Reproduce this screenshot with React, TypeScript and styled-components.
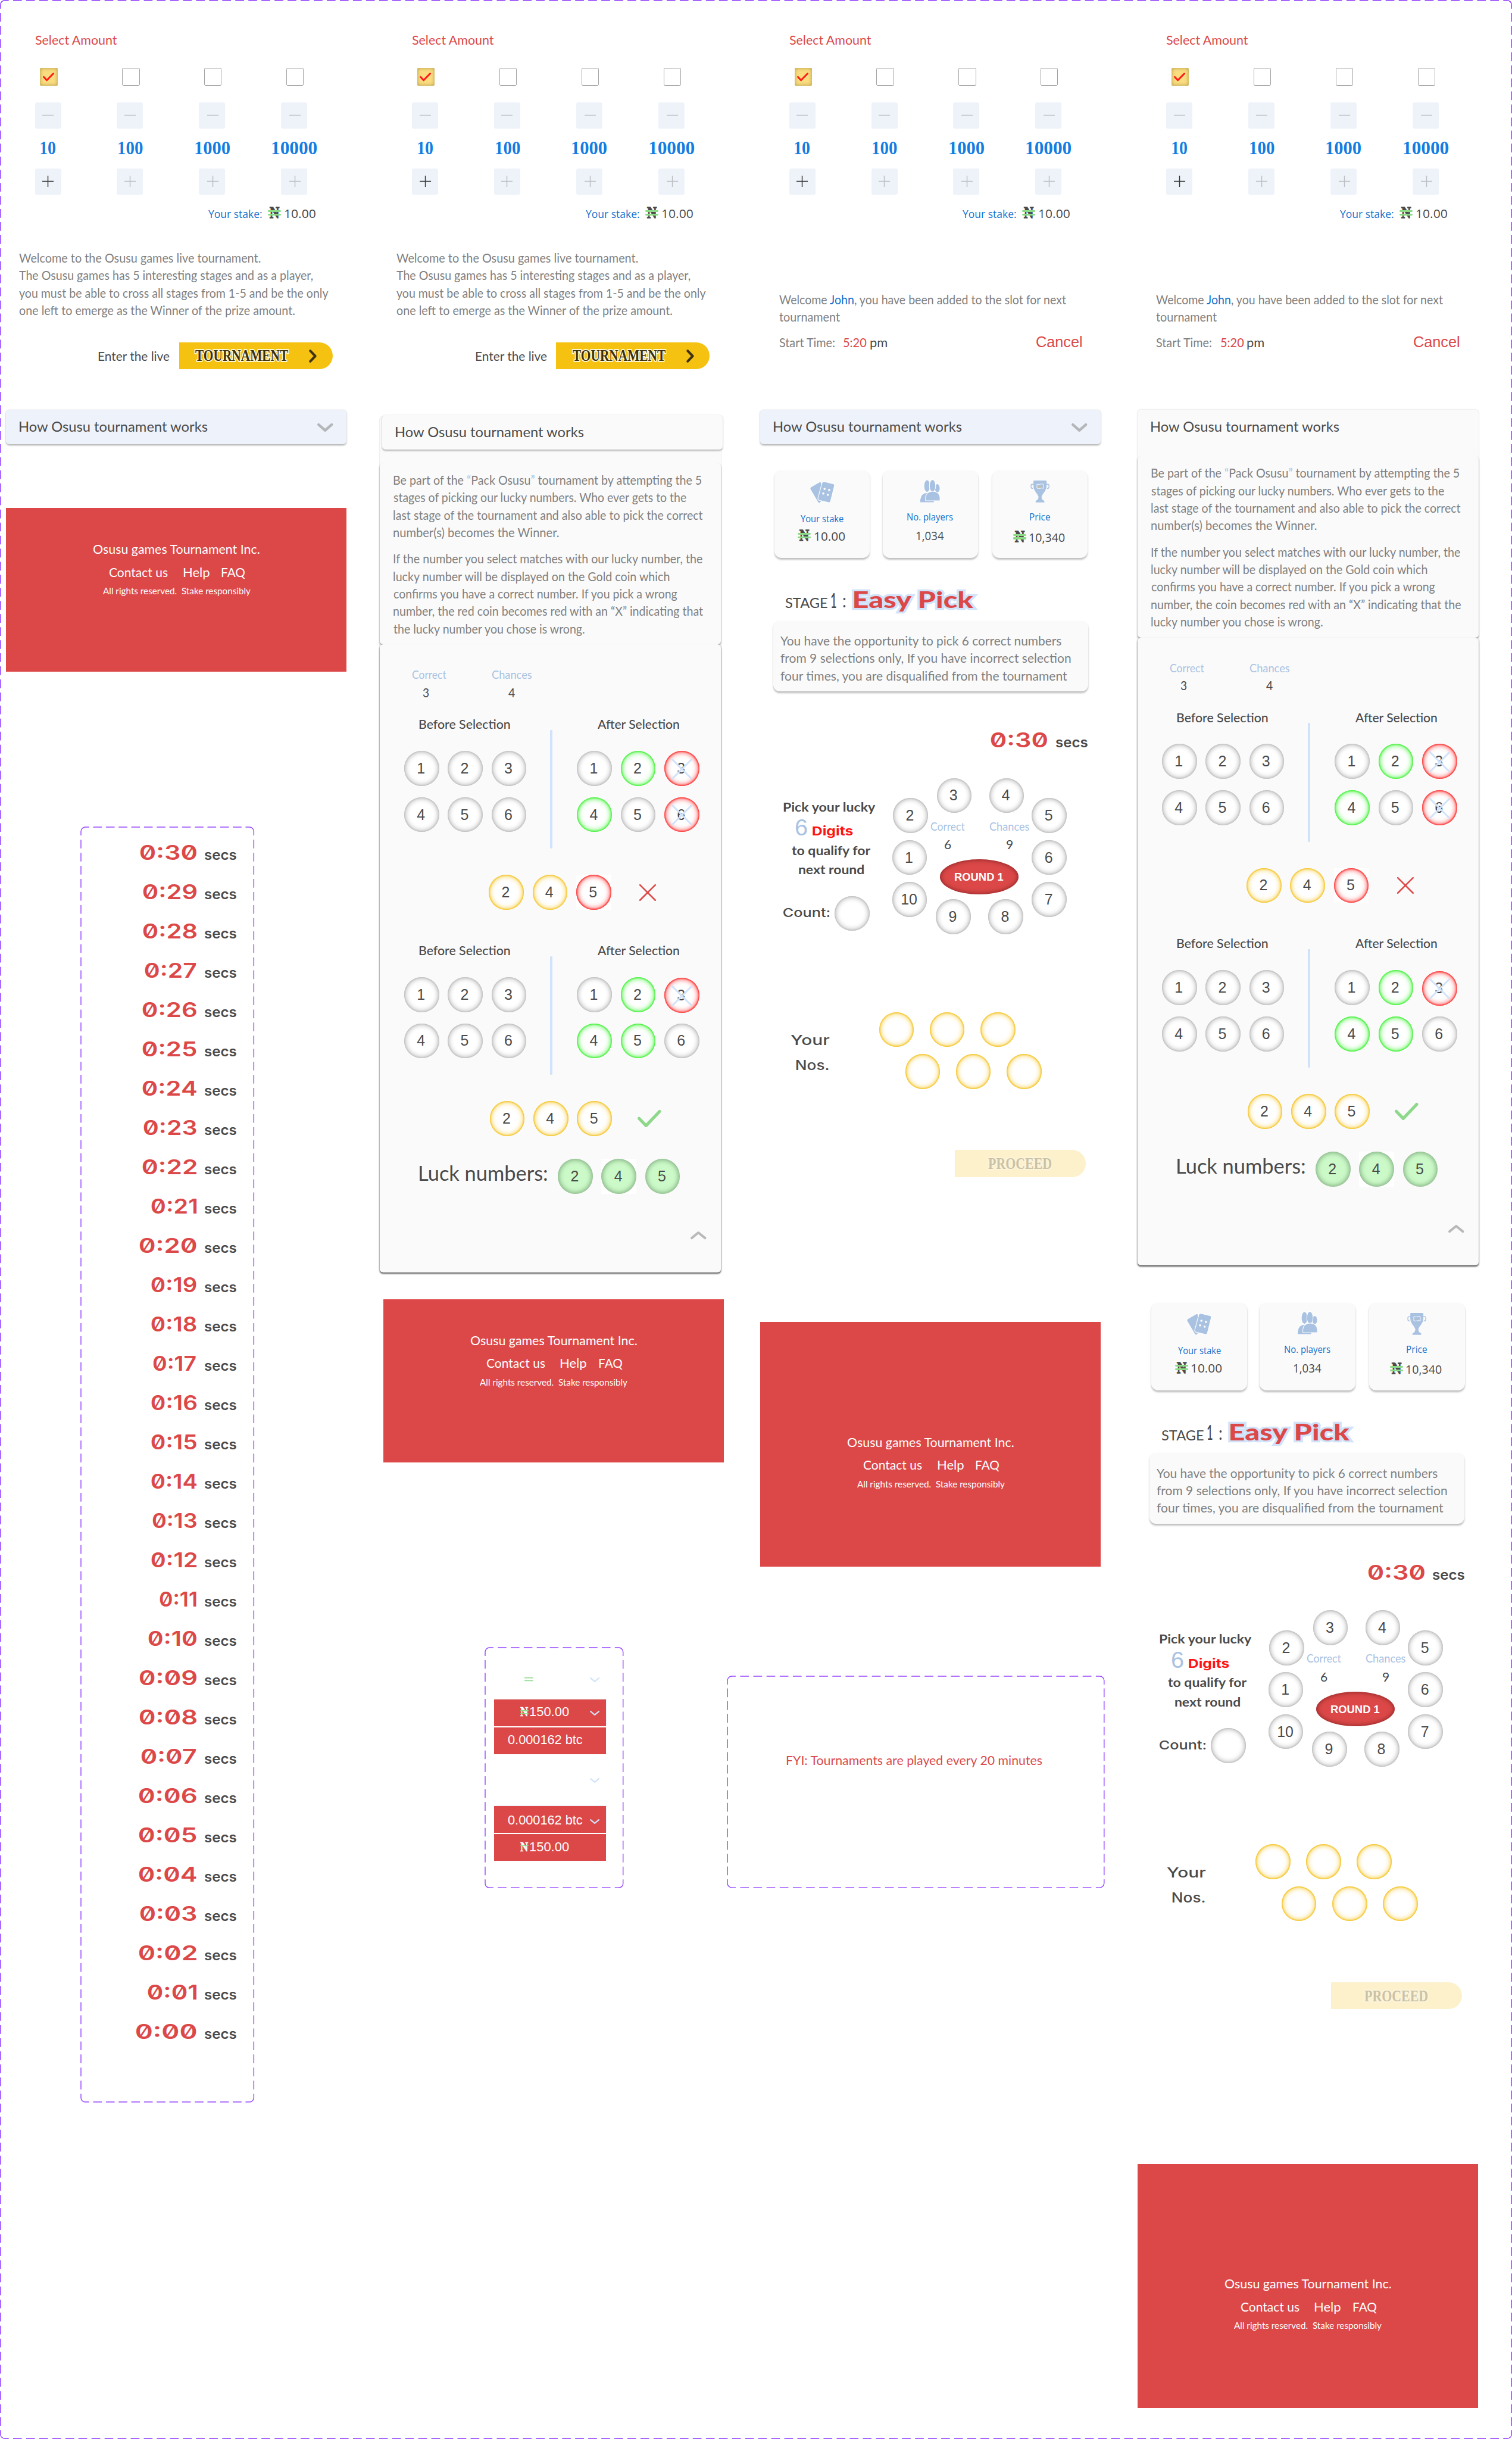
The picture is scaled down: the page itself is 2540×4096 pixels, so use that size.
import React, { useLayoutEffect, useRef, useState } from "react";
import styled, { createGlobalStyle, css } from "styled-components";

/* Design units are the board's own pixels; u() converts them to screen pixels. */
const SCALE = 2540 / 3464;
const u = (n: number) => `${+(n * SCALE).toFixed(3)}px`;

const RED = "#dc4848";
const INK = "#4a4a4a";
const GREY = "#808080";
const BLUE = "#1271ce";
const PALE = "#a9c2e2";
const ICE = "#d1e3fa";
const PAPER = "#fafafa";

type Face = "body" | "light" | "display" | "tech" | "plain";

/* drop: how far the baseline lies under the middle of the line, in em */
const faces: Record<Face, { family: string; drop: number }> = {
  body: { family: '"Lato", sans-serif', drop: 0.387 },
  light: { family: '"Open Sans", "Noto Sans", sans-serif', drop: 0.388 },
  display: { family: '"Liberation Serif", serif', drop: 0.3375 },
  tech: { family: '"Inter", sans-serif', drop: 0.364 },
  plain: { family: '"Liberation Sans", Arial, sans-serif', drop: 0.3465 },
};

const Global = createGlobalStyle`
  html, body { margin: 0; padding: 0; background: #fff; }
  *, *::before, *::after { box-sizing: border-box; }
`;

/* ---------- text ---------- */

const TextSlot = styled.div<{ $w: number; $rise?: number; $ml?: number }>`
  display: flex;
  align-items: flex-end;
  flex: none;
  width: ${(p) => u(p.$w)};
  height: ${(p) => (p.$rise ? u(p.$rise) : "auto")};
  margin-left: ${(p) => u(p.$ml ?? 0)};
`;

const Glyphs = styled.span<{
  $face: Face;
  $size: number;
  $color: string;
  $weight: number;
  $outline?: string;
  $outlineWidth?: number;
}>`
  display: block;
  flex: none;
  white-space: pre;
  transform-origin: 0 50%;
  font-family: ${(p) => faces[p.$face].family};
  font-size: ${(p) => u(p.$size)};
  font-weight: ${(p) => p.$weight};
  line-height: 1;
  margin-bottom: ${(p) => -(0.5 - faces[p.$face].drop)}em;
  color: ${(p) => p.$color};
  ${(p) => p.$face === "tech" && css`font-feature-settings: "zero" 1;`}
  ${(p) =>
    p.$outline &&
    css`
      -webkit-text-stroke: ${u(p.$outlineWidth ?? 4)} ${p.$outline};
      paint-order: stroke fill;
    `}
`;

type TextProps = {
  w: number;
  size?: number;
  color?: string;
  face?: Face;
  weight?: number;
  rise?: number;
  ml?: number;
  outline?: string;
  outlineWidth?: number;
  children: React.ReactNode;
};

/* One line of text whose ink fills the given width and whose baseline is the slot's bottom edge. */
function Text({
  w,
  size = 28,
  color = INK,
  face = "body",
  weight = 400,
  rise,
  ml,
  outline,
  outlineWidth,
  children,
}: TextProps) {
  const ref = useRef<HTMLSpanElement>(null);
  const [fit, setFit] = useState({ scale: 1, shift: 0 });
  useLayoutEffect(() => {
    const el = ref.current;
    const ctx = document.createElement("canvas").getContext("2d");
    if (!el || !ctx) return;
    const cs = getComputedStyle(el);
    ctx.font = `${cs.fontWeight} ${cs.fontSize} ${cs.fontFamily}`;
    const m = ctx.measureText(el.textContent ?? "");
    const ink = m.actualBoundingBoxLeft + m.actualBoundingBoxRight;
    if (!ink) return;
    const scale = (w * SCALE) / ink;
    setFit({ scale, shift: m.actualBoundingBoxLeft * scale });
  }, [w]);
  return (
    <TextSlot $w={w} $rise={rise} $ml={ml}>
      <Glyphs
        ref={ref}
        $face={face}
        $size={size}
        $color={color}
        $weight={weight}
        $outline={outline}
        $outlineWidth={outlineWidth}
        style={{ transform: `translateX(${fit.shift}px) scaleX(${fit.scale})` }}
      >
        {children}
      </Glyphs>
    </TextSlot>
  );
}

/* ---------- layout primitives ---------- */

const Board = styled.main`
  position: relative;
  display: flex;
  align-items: flex-start;
  gap: ${u(84)};
  width: ${u(3464)};
  height: ${u(5586)};
  padding-left: ${u(14)};
  overflow: hidden;
  background: #fff;
`;

const Column = styled.section`
  display: flex;
  flex-direction: column;
  flex: none;
  width: ${u(780)};
`;

const BaseRow = styled.div<{ $rise?: number; $ml?: number; $mt?: number }>`
  display: flex;
  align-items: flex-end;
  height: ${(p) => (p.$rise ? u(p.$rise) : "auto")};
  margin-left: ${(p) => u(p.$ml ?? 0)};
  margin-top: ${(p) => u(p.$mt ?? 0)};
`;

const TopRow = styled.div<{ $ml?: number; $mt?: number }>`
  display: flex;
  align-items: flex-start;
  margin-left: ${(p) => u(p.$ml ?? 0)};
  margin-top: ${(p) => u(p.$mt ?? 0)};
`;

const Stack = styled.div<{ $ml?: number; $w?: number }>`
  display: flex;
  flex-direction: column;
  flex: none;
  margin-left: ${(p) => u(p.$ml ?? 0)};
  width: ${(p) => (p.$w ? u(p.$w) : "auto")};
`;

/* ---------- dashed component frames ---------- */

const FrameBox = styled.section<{ $w: number; $h: number; $ml: number; $mt: number }>`
  position: relative;
  display: flex;
  flex-direction: column;
  flex: none;
  width: ${(p) => u(p.$w)};
  height: ${(p) => u(p.$h)};
  margin-left: ${(p) => u(p.$ml)};
  margin-top: ${(p) => u(p.$mt)};
`;

const FrameLines = styled.svg`
  position: absolute;
  inset: 0;
  width: 100%;
  height: 100%;
  overflow: visible;
  pointer-events: none;
`;

function Dashes({ w, h, inset = 0 }: { w: number; h: number; inset?: number }) {
  const a = inset;
  const r = w - inset;
  const b = h - inset;
  const gapFor = (len: number) => {
    const free = len - 38;
    const n = Math.max(1, Math.round((free - 10) / 30));
    return (free - n * 20) / (n + 1);
  };
  const gx = gapFor(r - a);
  const gy = gapFor(b - a);
  return (
    <FrameLines viewBox={`0 0 ${w} ${h}`} preserveAspectRatio="none" fill="none" stroke="#9747ff" strokeWidth={2}>
      <path d={`M${a} ${a + 19}V${a + 10}A10 10 0 0 1 ${a + 10} ${a}H${a + 19}`} />
      <path d={`M${r - 19} ${a}H${r - 10}A10 10 0 0 1 ${r} ${a + 10}V${a + 19}`} />
      <path d={`M${r} ${b - 19}V${b - 10}A10 10 0 0 1 ${r - 10} ${b}H${r - 19}`} />
      <path d={`M${a + 19} ${b}H${a + 10}A10 10 0 0 1 ${a} ${b - 10}V${b - 19}`} />
      <path d={`M${a + 19} ${a}H${r - 19}M${a + 19} ${b}H${r - 19}`} strokeDasharray={`20 ${gx}`} strokeDashoffset={20} />
      <path d={`M${a} ${a + 19}V${b - 19}M${r} ${a + 19}V${b - 19}`} strokeDasharray={`20 ${gy}`} strokeDashoffset={20} />
    </FrameLines>
  );
}

/* ---------- small drawings ---------- */

const Drawing = styled.svg<{ $w: number; $h: number; $ml?: number; $mt?: number }>`
  display: block;
  flex: none;
  overflow: visible;
  width: ${(p) => u(p.$w)};
  height: ${(p) => u(p.$h)};
  margin-left: ${(p) => u(p.$ml ?? 0)};
  margin-top: ${(p) => u(p.$mt ?? 0)};
`;

const line = { fill: "none", strokeLinecap: "round", strokeLinejoin: "round" } as const;

function Chevron({
  w,
  h,
  color,
  stroke,
  ml,
  mt,
  up,
}: {
  w: number;
  h: number;
  color: string;
  stroke: number;
  ml?: number;
  mt?: number;
  up?: boolean;
}) {
  const s = stroke / 2;
  const d = up ? `M${s} ${h - s}L${w / 2} ${s}L${w - s} ${h - s}` : `M${s} ${s}L${w / 2} ${h - s}L${w - s} ${s}`;
  return (
    <Drawing $w={w} $h={h} $ml={ml} $mt={mt} viewBox={`0 0 ${w} ${h}`}>
      <path {...line} d={d} stroke={color} strokeWidth={stroke} />
    </Drawing>
  );
}

const NairaBox = styled.span<{ $small?: boolean; $ml?: number }>`
  position: relative;
  display: flex;
  justify-content: center;
  flex: none;
  width: ${(p) => u(p.$small ? 19 : 30)};
  margin-left: ${(p) => u(p.$ml ?? 0)};
  &::before,
  &::after {
    content: "";
    position: absolute;
    left: 0;
    right: 0;
    z-index: 1;
    height: ${(p) => u(p.$small ? 2 : 4.2)};
    bottom: ${(p) => u(p.$small ? 13 : 14)};
    border-radius: ${u(2)};
    background: #8bdb86;
  }
  &::after {
    bottom: ${(p) => u(p.$small ? 7 : 6)};
  }
`;

const Naira = ({ small, ml }: { small?: boolean; ml?: number }) => (
  <NairaBox $small={small} $ml={ml}>
    <Text
      face="display"
      weight={700}
      size={small ? 32 : 36}
      w={small ? 18 : 22}
      color={small ? "#fff" : INK}
      outline={small ? "#fff" : INK}
      outlineWidth={small ? 1 : 2}
    >
      N
    </Text>
  </NairaBox>
);

/* ---------- stake selector ---------- */

const TopArea = styled.div`
  display: flex;
  flex-direction: column;
  flex: none;
  height: ${u(938)};
`;

const BoxRow = styled.div<{ $gap: number; $mt: number; $ml?: number }>`
  display: flex;
  gap: ${(p) => u(p.$gap)};
  margin-top: ${(p) => u(p.$mt)};
  margin-left: ${(p) => u(p.$ml ?? 0)};
`;

const CheckBox = styled.div<{ $on?: boolean }>`
  display: flex;
  align-items: center;
  justify-content: center;
  width: ${u(40)};
  height: ${u(40)};
  border-radius: ${u(3)};
  border: ${(p) => (p.$on ? "none" : `${u(2)} solid #a3a3a3`)};
  background: ${(p) => (p.$on ? "#fadd7f" : "#fff")};
  box-shadow: ${(p) => (p.$on ? `inset 0 0 ${u(8)} rgba(80, 60, 0, 0.45)` : "none")};
`;

const StepBox = styled.div<{ $nudge?: boolean }>`
  display: flex;
  align-items: center;
  justify-content: center;
  width: ${u(60)};
  height: ${u(60)};
  padding-left: ${(p) => u(p.$nudge ? 4 : 0)};
  border-radius: ${u(4)};
  background: #eef3fa;
`;

const amounts = [
  { value: "10", w: 35, ml: 13 },
  { value: "100", w: 56, ml: 144 },
  { value: "1000", w: 80, ml: 119 },
  { value: "10000", w: 103.5, ml: 96.5 },
];

function Selector() {
  return (
    <Stack $ml={66}>
      <Text rise={103} w={189} size={29} color={RED}>
        Select Amount
      </Text>
      <BoxRow $gap={148} $mt={53} $ml={12}>
        {amounts.map((a, i) => (
          <CheckBox key={a.value} $on={i === 0}>
            {i === 0 && (
              <Drawing $w={26} $h={20} $ml={-2} viewBox="0 0 26 20">
                <path {...line} d="M2 10L9 17.5L24 2" stroke="#ff1a1a" strokeWidth={4} />
              </Drawing>
            )}
          </CheckBox>
        ))}
      </BoxRow>
      <BoxRow $gap={128} $mt={38}>
        {amounts.map((a, i) => (
          <StepBox key={a.value} $nudge={i > 1}>
            <Drawing $w={26} $h={26} viewBox="0 0 26 26">
              <path d="M0 13H26" stroke="#bcbfc4" strokeWidth={2} />
            </Drawing>
          </StepBox>
        ))}
      </BoxRow>
      <BaseRow $rise={60}>
        {amounts.map((a) => (
          <Text key={a.value} face="display" weight={700} size={42} w={a.w} ml={a.ml} color="#147de2">
            {a.value}
          </Text>
        ))}
      </BaseRow>
      <BoxRow $gap={128} $mt={32}>
        {amounts.map((a, i) => (
          <StepBox key={a.value} $nudge={i > 1}>
            <Drawing $w={26} $h={26} viewBox="0 0 26 26">
              <path d="M0 13H26M13 0V26" stroke={i === 0 ? "#333" : "#bcbfc4"} strokeWidth={2} />
            </Drawing>
          </StepBox>
        ))}
      </BoxRow>
      <BaseRow $rise={54}>
        <Text face="light" size={25} w={122.5} ml={397.5} color={BLUE}>
          Your stake:
        </Text>
        <Naira ml={14} />
        <Text face="light" size={28} w={71} ml={8}>
          10.00
        </Text>
      </BaseRow>
    </Stack>
  );
}

const PillButton = styled.button<{ $w: number; $ml: number; $mt?: number; $faded?: boolean }>`
  display: flex;
  align-items: flex-start;
  flex: none;
  width: ${(p) => u(p.$w)};
  height: ${u(62)};
  margin: ${(p) => u(p.$mt ?? 0)} 0 0 ${(p) => u(p.$ml)};
  padding: 0;
  border: 0;
  border-radius: 0 ${u(31)} ${u(31)} 0;
  background: ${(p) => (p.$faded ? "#fdf1cc" : "#f5c211")};
`;

const Intro = () => (
  <>
    <Stack $ml={30}>
      <Text rise={102} w={553} color={GREY}>Welcome to the Osusu games live tournament.</Text>
      <Text rise={40} w={673} color={GREY}>The Osusu games has 5 interesting stages and as a player,</Text>
      <Text rise={40} w={709} color={GREY}>you must be able to cross all stages from 1-5 and be the only</Text>
      <Text rise={40} w={633} color={GREY}>one left to emerge as the Winner of the prize amount.</Text>
    </Stack>
    <TopRow $mt={62} $ml={211}>
      <Text rise={44} w={164} size={29}>Enter the live</Text>
      <PillButton $w={352} $ml={21}>
        <Text
          rise={44}
          ml={38}
          w={213}
          face="display"
          weight={700}
          size={37}
          color="#3d2f08"
          outline="#fffbe0"
          outlineWidth={5}
        >
          TOURNAMENT
        </Text>
        <Drawing $w={18} $h={30} $ml={47} $mt={17} viewBox="0 0 18 30">
          <path {...line} d="M3 3L14.500 15L3 27" stroke="#3f3212" strokeWidth={5.5} />
        </Drawing>
      </PillButton>
    </TopRow>
  </>
);

const Name = styled.span`
  color: ${BLUE};
`;

const Joined = () => (
  <Stack $ml={43}>
    <Text rise={197} w={660} color={GREY}>
      Welcome <Name>John</Name>, you have been added to the slot for next
    </Text>
    <Text rise={40} w={140} color={GREY}>tournament</Text>
    <BaseRow $rise={59}>
      <Text w={127.5} color={GREY}>Start Time:</Text>
      <Text w={53} ml={20} color={RED}>5:20</Text>
      <Text w={38.5} ml={8}>pm</Text>
      <Text w={103.6} ml={343} face="plain" size={34} color={RED}>Cancel</Text>
    </BaseRow>
  </Stack>
);

/* ---------- accordion header and footer ---------- */

const Bar = styled.div<{ $light?: boolean }>`
  position: relative;
  display: flex;
  align-items: flex-start;
  flex: none;
  width: ${u(780)};
  height: ${u(80)};
  margin: ${(p) => (p.$light ? `${u(-4)} 0 0 ${u(6)}` : "0")};
  border-radius: ${u(8)};
  background: ${(p) => (p.$light ? PAPER : "#eef2fa")};
  box-shadow: 0 ${u(2)} ${u(4)} rgba(0, 0, 0, 0.3);
`;

const ClosedBar = () => (
  <Bar>
    <Text rise={52} w={432} ml={31} size={32}>How Osusu tournament works</Text>
    <Chevron w={36} h={19} ml={250} mt={32} color="#b4b6b9" stroke={6} />
  </Bar>
);

const FooterBox = styled.footer<{ $tall?: boolean; $mt: number }>`
  display: flex;
  flex-direction: column;
  align-items: center;
  flex: none;
  height: ${(p) => u(p.$tall ? 560 : 374)};
  margin-top: ${(p) => u(p.$mt)};
  background: ${RED};
`;

const Footer = ({ tall, mt }: { tall?: boolean; mt: number }) => (
  <FooterBox $tall={tall} $mt={mt}>
    <Text rise={tall ? 287 : 106} w={381} ml={2} size={29} color="#fff">Osusu games Tournament Inc.</Text>
    <BaseRow $rise={52} $ml={6}>
      <Text w={133} size={30} color="#fff">Contact us</Text>
      <Text w={59} ml={37} size={30} color="#fff">Help</Text>
      <Text w={53.5} ml={29} size={30} color="#fff">FAQ</Text>
    </BaseRow>
    <Text rise={40} w={339} ml={2} size={22} color="#fff">{"All rights reserved.  Stake responsibly"}</Text>
  </FooterBox>
);

/* ---------- coins ---------- */

type Tone = "plain" | "green" | "red" | "gold" | "lucky";

const rings: Record<Tone, string> = {
  plain: `inset 0 0 ${u(3)} ${u(1)} #bdbdbd, inset 0 0 ${u(12)} ${u(2)} rgba(0, 0, 0, 0.3)`,
  green: `inset 0 0 ${u(3)} ${u(2)} #48f03e, inset 0 0 ${u(12)} ${u(3)} rgba(72, 245, 62, 0.85)`,
  red: `inset 0 0 ${u(3)} ${u(2)} #fb3636, inset 0 0 ${u(12)} ${u(3)} rgba(255, 50, 50, 0.8)`,
  gold: `inset 0 0 ${u(3)} ${u(2)} #f4c52c, inset 0 0 ${u(12)} ${u(3)} rgba(247, 200, 50, 0.8)`,
  lucky: `inset 0 0 ${u(12)} ${u(2)} rgba(0, 40, 0, 0.4)`,
};

const CoinFace = styled.div<{ $tone: Tone; $down?: number }>`
  position: relative;
  display: flex;
  align-items: center;
  justify-content: center;
  flex: none;
  width: ${u(80)};
  height: ${u(80)};
  margin-top: ${(p) => u(p.$down ?? 0)};
  padding-right: ${u(3)};
  border-radius: 50%;
  background: ${(p) => (p.$tone === "lucky" ? "#cbfac8" : "#fff")};
  box-shadow: ${(p) => rings[p.$tone]};
  color: ${INK};
  font: 400 ${u(34)} / 1 ${faces.plain.family};
`;

const Plate = styled.div`
  background: #fff;
`;

const Strike = styled.svg`
  position: absolute;
  left: ${u(16)};
  top: ${u(17)};
  width: ${u(48)};
  height: ${u(48)};
`;

const Coin = ({ n, tone = "plain", struck, down }: { n?: number; tone?: Tone; struck?: boolean; down?: number }) => (
  <CoinFace $tone={tone} $down={down}>
    {n}
    {struck && (
      <Strike viewBox="0 0 48 48">
        <path d="M1.500 1.500L46.500 46.500M46.500 1.500L1.500 46.500" stroke={ICE} strokeWidth={4} strokeLinecap="round" />
      </Strike>
    )}
  </CoinFace>
);

const CoinGrid = styled.div<{ $ml: number }>`
  display: grid;
  grid-template-columns: repeat(3, ${u(80)});
  grid-auto-rows: ${u(80)};
  gap: ${u(26)} ${u(20)};
  margin: ${u(48)} 0 0 ${(p) => u(p.$ml)};
`;

const CoinRow = styled.div<{ $ml?: number; $mt?: number; $gap?: number }>`
  display: flex;
  align-items: center;
  gap: ${(p) => u(p.$gap ?? 20)};
  margin-left: ${(p) => u(p.$ml ?? 0)};
  margin-top: ${(p) => u(p.$mt ?? 0)};
`;

/* ---------- how-it-works panel ---------- */

const Panel = styled.article<{ $ml: number; $mt: number }>`
  display: flex;
  flex-direction: column;
  flex: none;
  width: ${u(781)};
  height: ${u(1960)};
  margin: ${(p) => u(p.$mt)} 0 0 ${(p) => u(p.$ml)};
  border-radius: ${u(8)};
  background: ${PAPER};
  box-shadow: 0 ${u(1)} ${u(3)} rgba(0, 0, 0, 0.22);
`;

const PanelHead = styled.div`
  flex: none;
  height: ${u(107)};
`;

/* Every lower part adds to the shade along the sheet's sides. */
const PanelPart = styled.div<{ $h: number; $pl?: number; $shade: number }>`
  display: flex;
  flex-direction: column;
  flex: none;
  height: ${(p) => u(p.$h)};
  padding-left: ${(p) => u(p.$pl ?? 0)};
  border-radius: ${u(8)};
  background: ${PAPER};
  box-shadow: 0 ${u(3)} ${u(4)} ${u(-0.5)} rgba(0, 0, 0, ${(p) => p.$shade});
`;

const Divider = styled.div`
  flex: none;
  width: ${u(6)};
  height: ${u(272)};
  margin-left: ${u(54)};
  border-radius: ${u(2)};
  background: ${ICE};
`;

const Quote = styled.span`
  color: ${PALE};
`;

type Cell = { n: number; tone?: Tone; struck?: boolean; down?: number };

const before: Cell[] = [1, 2, 3, 4, 5, 6].map((n) => ({ n }));

const lostRound: Cell[] = [
  { n: 1 },
  { n: 2, tone: "green" },
  { n: 3, tone: "red", struck: true },
  { n: 4, tone: "green" },
  { n: 5 },
  { n: 6, tone: "red", struck: true },
];

const wonRound: Cell[] = [
  { n: 1 },
  { n: 2, tone: "green" },
  { n: 3, tone: "red", struck: true, down: 2 },
  { n: 4, tone: "green" },
  { n: 5, tone: "green" },
  { n: 6 },
];

const Example = ({ rise, cells }: { rise: number; cells: Cell[] }) => (
  <>
    <BaseRow $rise={rise}>
      <Text w={209} ml={90} weight={500}>Before Selection</Text>
      <Text w={188} ml={200} weight={500}>After Selection</Text>
    </BaseRow>
    <TopRow $mt={2}>
      <CoinGrid $ml={56}>
        {before.map((c) => (
          <Coin key={c.n} {...c} />
        ))}
      </CoinGrid>
      <Divider />
      <CoinGrid $ml={56}>
        {cells.map((c) => (
          <Coin key={c.n} {...c} />
        ))}
      </CoinGrid>
    </TopRow>
  </>
);

function HowItWorks({ detached, ml = 0, mt = 0 }: { detached?: boolean; ml?: number; mt?: number }) {
  const title = (
    <Text rise={52.5} w={432} ml={31.5} size={32}>How Osusu tournament works</Text>
  );
  return (
    <Panel $ml={ml} $mt={mt}>
      <PanelHead>{detached ? <Bar $light>{title}</Bar> : title}</PanelHead>
      <PanelPart $h={415} $pl={31} $shade={0.4}>
        <Text rise={49.6} w={707} color={GREY}>
          Be part of the <Quote>“</Quote>Pack Osusu<Quote>”</Quote> tournament by attempting the 5
        </Text>
        <Text rise={40} w={674} color={GREY}>stages of picking our lucky numbers. Who ever gets to the</Text>
        <Text rise={40} w={710} color={GREY}>last stage of the tournament and also able to pick the correct</Text>
        <Text rise={40} w={379} color={GREY}>number(s) becomes the Winner.</Text>
        <Text rise={60.3} w={712} color={GREY}>If the number you select matches with our lucky number, the</Text>
        <Text rise={40} w={635} color={GREY}>lucky number will be displayed on the Gold coin which</Text>
        <Text rise={40} w={653} color={GREY}>confirms you have a correct number. If you pick a wrong</Text>
        {detached ? (
          <>
            <Text rise={40} w={711} color={GREY}>number, the red coin becomes red with an “X” indicating that</Text>
            <Text rise={40} w={440} color={GREY}>the lucky number you chose is wrong.</Text>
          </>
        ) : (
          <>
            <Text rise={40} w={711} color={GREY}>number, the coin becomes red with an “X” indicating that the</Text>
            <Text rise={40} w={395} color={GREY}>lucky number you chose is wrong.</Text>
          </>
        )}
      </PanelPart>
      <PanelPart $h={1438} $shade={0.65}>
        <BaseRow $rise={79}>
          <Text w={79} ml={74} size={26} color={PALE}>Correct</Text>
          <Text w={92} ml={103} size={26} color={PALE}>Chances</Text>
        </BaseRow>
        <BaseRow $rise={42.4}>
          <Text w={14} ml={98.6}>3</Text>
          <Text w={15.5} ml={182.3}>4</Text>
        </BaseRow>
        <Example rise={72.6} cells={lostRound} />
        <CoinRow $mt={60} $ml={250}>
          <Coin n={2} tone="gold" />
          <Coin n={4} tone="gold" />
          <Plate>
            <Coin n={5} tone="red" />
          </Plate>
          <Drawing $w={38} $h={38} $ml={45} viewBox="0 0 38 38">
            <path d="M1.500 1.500L36.500 36.500M36.500 1.500L1.500 36.500" stroke={RED} strokeWidth={3.5} strokeLinecap="round" />
          </Drawing>
        </CoinRow>
        <Example rise={104} cells={wonRound} />
        <CoinRow $mt={60} $ml={252}>
          <Coin n={2} tone="gold" />
          <Coin n={4} tone="gold" />
          <Coin n={5} tone="gold" />
          <Drawing $w={54} $h={40} $ml={38} viewBox="0 0 54 40">
            <path {...line} d="M3.500 19.500L19.500 36L50.500 3.500" stroke="#8ed88b" strokeWidth={7} />
          </Drawing>
        </CoinRow>
        <TopRow $mt={52} $ml={92}>
          <Text rise={51} w={292} size={47}>Luck numbers:</Text>
          <CoinRow $ml={24}>
            <Coin n={2} tone="lucky" />
            <Plate>
              <Coin n={4} tone="lucky" />
            </Plate>
            <Coin n={5} tone="lucky" />
          </CoinRow>
        </TopRow>
        <Chevron up w={36} h={18} ml={712} mt={87} color="#b9b9b9" stroke={5.5} />
      </PanelPart>
    </Panel>
  );
}

/* ---------- stage ---------- */

const Card = styled.div<{ $ml?: number; $pt: number }>`
  display: flex;
  flex-direction: column;
  align-items: center;
  flex: none;
  width: ${u(219)};
  height: ${u(200)};
  margin-left: ${(p) => u(p.$ml ?? 0)};
  padding-top: ${(p) => u(p.$pt)};
  border-radius: ${u(16)};
  background: ${PAPER};
  box-shadow: 0 ${u(4)} ${u(4)} rgba(0, 0, 0, 0.25);
`;

const CardsIcon = () => (
  <Drawing $w={55} $h={50} viewBox="0 0 55 50">
    <path
      d="M1.500 13L21.500 1.500Q24 0.500 25 3L30 40L22 48Q19.500 49.500 18 46.500L0.500 16.500Q0 14.500 1.500 13Z"
      fill={PALE}
      stroke="#fff"
      strokeWidth={2}
      paintOrder="stroke"
    />
    <path
      d="M31.500 0.500L53 5.500Q55.500 6.500 55 9L46 45Q45 47.500 42.500 47L20 41.500Q18 40.500 18.500 38L28 2.500Q29 0 31.500 0.500Z"
      fill={PALE}
      stroke="#fff"
      strokeWidth={3}
      paintOrder="stroke"
    />
    {[[33, 16.5], [43.5, 19], [30, 27], [40.5, 30]].map(([x, y]) => (
      <circle key={x} cx={x} cy={y} r={2.5} fill="#fff" />
    ))}
  </Drawing>
);

const PlayersIcon = () => (
  <Drawing $w={45} $h={52} viewBox="0 0 45 52">
    <g fill={PALE} stroke="#fff" strokeWidth={2.5} paintOrder="stroke">
      <ellipse cx={39} cy={19} rx={5.5} ry={9.5} />
      <ellipse cx={15.5} cy={14} rx={6.5} ry={13.5} />
      <ellipse cx={28} cy={13.5} rx={6.5} ry={13.5} />
      <path d="M0 51V45Q2 30 16 29.500L31 40V51Z" />
      <path d="M12.500 47V40Q14 27 28.500 26.500Q43 27 44.500 40V47Z" />
    </g>
  </Drawing>
);

const TrophyIcon = () => (
  <Drawing $w={44} $h={51} viewBox="0 0 44 51">
    <path
      d="M7 8.500H4Q1.500 8.500 1.500 11V15Q1.500 18.500 6 18.500M37 8.500H40Q42.500 8.500 42.500 11V15Q42.500 18.500 38 18.500"
      fill="none"
      stroke={PALE}
      strokeWidth={2}
    />
    <path
      d="M9 0H35Q37 0 37 2V12C37 24 28 29 25.500 37Q25.500 44 30 45.500Q32.500 46 32 50H12Q11.500 46 14 45.500Q18.500 44 18.500 37C16 29 7 24 7 12V2Q7 0 9 0Z"
      fill={PALE}
    />
    <path d="M15 8Q19 10 22 8.500Q26 7 30 8.500V18Q26 16.500 22 18Q19 19 15 17.500Z" fill="none" stroke="#fff" strokeWidth={1.2} />
    <path d="M17 15.500L20 14.500M22 16L24.500 13M26 11.500L27 12" stroke="#dcb96a" strokeWidth={1.5} />
  </Drawing>
);

const DescBox = styled.div<{ $ml: number }>`
  display: flex;
  flex-direction: column;
  width: ${u(720.5)};
  height: ${u(162)};
  margin: ${u(28.5)} 0 0 ${(p) => u(p.$ml)};
  padding-left: ${u(16.5)};
  border-radius: ${u(15)};
  background: ${PAPER};
  box-shadow: 0 ${u(4)} ${u(4)} rgba(0, 0, 0, 0.25);
`;

const PlayArea = styled.div<{ $pl: number }>`
  display: flex;
  align-items: flex-start;
  height: ${u(428)};
  padding-left: ${(p) => u(p.$pl)};
`;

/* Coins lie round an oval, so each has its own place on this surface. */
const Ring = styled.div`
  position: relative;
  flex: none;
  width: ${u(400)};
  height: ${u(358)};
  margin-top: ${u(70)};
`;

const Pin = styled.div<{ $x: number; $y: number }>`
  position: absolute;
  left: ${(p) => u(p.$x)};
  top: ${(p) => u(p.$y)};
`;

const RoundBadge = styled.div`
  display: flex;
  justify-content: center;
  align-items: flex-start;
  width: ${u(180)};
  height: ${u(80)};
  border-radius: 50%;
  background: ${RED};
  box-shadow: inset 0 0 ${u(12)} rgba(60, 0, 0, 0.6);
`;

const ringCoins = [
  { n: 1, x: 0, y: 142 },
  { n: 2, x: 2, y: 46 },
  { n: 3, x: 102, y: 0 },
  { n: 4, x: 222, y: 0 },
  { n: 5, x: 320, y: 46 },
  { n: 6, x: 320, y: 142 },
  { n: 7, x: 320, y: 238 },
  { n: 8, x: 220, y: 278 },
  { n: 9, x: 100, y: 278 },
  { n: 10, x: 0, y: 238 },
];

function Clock({ time, w, ml, rise }: { time: string; w: number; ml?: number; rise?: number }) {
  return (
    <BaseRow $rise={rise} $ml={ml}>
      <Text face="tech" weight={600} size={46} w={w} color={RED}>{time}</Text>
      <Text face="tech" weight={600} size={32} w={72} ml={19}>secs</Text>
    </BaseRow>
  );
}

function Stage({ mt, shift = 0 }: { mt: number; shift?: number }) {
  return (
    <>
      <TopRow $mt={mt} $ml={32}>
        <Card $pt={25}>
          <CardsIcon />
          <Text rise={44} w={98} face="light" size={23} color={BLUE}>Your stake</Text>
          <BaseRow $rise={41.5} $ml={-4}>
            <Naira />
            <Text w={70} ml={7} face="light">10.00</Text>
          </BaseRow>
        </Card>
        <Card $ml={29} $pt={21}>
          <PlayersIcon />
          <Text rise={43} w={105} face="light" size={23} color={BLUE}>No. players</Text>
          <Text rise={44} w={64} face="light">1,034</Text>
        </Card>
        <Card $ml={32} $pt={23}>
          <TrophyIcon />
          <Text rise={42} w={46.5} face="light" size={23} color={BLUE}>Price</Text>
          <BaseRow $rise={47} $ml={-5}>
            <Naira />
            <Text w={81} ml={7} face="light">10,340</Text>
          </BaseRow>
        </Card>
      </TopRow>
      <BaseRow $rise={115.5} $ml={56.5 + shift}>
        <Text w={97} size={32}>STAGE</Text>
        <Text w={12} ml={8} size={46} weight={500}>1</Text>
        <Text w={6} ml={15} size={42}>:</Text>
        <Text w={277} ml={19} size={53} weight={900} color={RED} outline={ICE} outlineWidth={9}>Easy Pick</Text>
      </BaseRow>
      <DescBox $ml={30 + shift}>
        <Text rise={56.6} w={645} color={GREY}>You have the opportunity to pick 6 correct numbers</Text>
        <Text rise={40} w={667} color={GREY}>from 9 selections only, If you have incorrect selection</Text>
        <Text rise={40} w={659} color={GREY}>four times, you are disqualified from the tournament</Text>
      </DescBox>
      <Clock time="0:30" w={130} ml={528} rise={128} />
      <PlayArea $pl={53 + shift}>
        <Stack $w={249}>
          <Text rise={148} w={213} weight={700} size={29}>Pick your lucky</Text>
          <BaseRow $rise={54.5} $ml={28.5}>
            <Text w={26} size={54} face="plain" color={PALE}>6</Text>
            <Text w={92.5} ml={12} face="tech" weight={700} size={28} color="#ff1414">Digits</Text>
          </BaseRow>
          <Text rise={44} ml={19} w={181.5} weight={700}>to qualify for</Text>
          <Text rise={44} ml={35} w={149.5} weight={700}>next round</Text>
          <TopRow $mt={49.5}>
            <Text rise={50} w={106} face="tech" weight={500} size={28}>Count:</Text>
            <Stack $ml={11}>
              <Coin />
            </Stack>
          </TopRow>
        </Stack>
        <Ring>
          {ringCoins.map((c) => (
            <Pin key={c.n} $x={c.x} $y={c.y}>
              <Coin n={c.n} />
            </Pin>
          ))}
          <Pin $x={87} $y={90}>
            <Text rise={30} w={79} size={26} color={PALE}>Correct</Text>
            <Text rise={43.5} w={14} ml={33}>6</Text>
          </Pin>
          <Pin $x={222.5} $y={90}>
            <Text rise={30} w={91.5} size={26} color={PALE}>Chances</Text>
            <Text rise={43.5} w={14} ml={39}>9</Text>
          </Pin>
          <Pin $x={110} $y={186}>
            <RoundBadge>
              <Text rise={50} w={112} face="plain" weight={700} size={26} color="#fff">ROUND 1</Text>
            </RoundBadge>
          </Pin>
        </Ring>
      </PlayArea>
      <TopRow $mt={178} $ml={shift}>
        <Stack $w={203} $ml={69}>
          <Text rise={77} w={90} face="tech" weight={500} size={31}>Your</Text>
          <Text rise={57} w={75.5} ml={12.5} face="tech" weight={500} size={31}>Nos.</Text>
        </Stack>
        <Stack>
          <CoinRow $gap={36}>
            <Coin tone="gold" />
            <Coin tone="gold" />
            <Coin tone="gold" />
          </CoinRow>
          <CoinRow $gap={36} $mt={16} $ml={60}>
            <Coin tone="gold" />
            <Coin tone="gold" />
            <Coin tone="gold" />
          </CoinRow>
        </Stack>
      </TopRow>
      <PillButton $w={300} $ml={446 + shift} $mt={140} $faded>
        <Text
          rise={44}
          ml={76}
          w={145}
          face="display"
          weight={700}
          size={36}
          color="#cac2a6"
          outline="#fdf4d9"
          outlineWidth={6}
        >
          PROCEED
        </Text>
      </PillButton>
    </>
  );
}

/* ---------- countdown ---------- */

const lastDigit = [111, 84, 104, 101, 104, 104, 104, 99, 103, 103];
const tensExtra = [28, 0, 20, 19];

const ticks = Array.from({ length: 31 }, (_, i) => {
  const s = 30 - i;
  return {
    time: `0:${String(s).padStart(2, "0")}`,
    w: lastDigit[s % 10] + tensExtra[Math.floor(s / 10)],
  };
});

const TickRow = styled.div<{ $rise: number }>`
  display: flex;
  flex: none;
  align-items: flex-end;
  justify-content: flex-end;
  height: ${(p) => u(p.$rise)};
  padding-right: ${u(40)};
`;

const Countdown = () => (
  <FrameBox $w={396} $h={2920} $ml={171} $mt={356}>
    <Dashes w={396} h={2920} />
    {ticks.map((t, i) => (
      <TickRow key={t.time} $rise={i === 0 ? 76 : 90}>
        <Clock time={t.time} w={t.w} />
      </TickRow>
    ))}
  </FrameBox>
);

/* ---------- currency switch ---------- */

const Option = styled.div<{ $mt: number; $edge?: string }>`
  display: flex;
  align-items: flex-start;
  flex: none;
  width: ${u(256)};
  height: ${u(62)};
  margin: ${(p) => u(p.$mt)} 0 0 ${u(21)};
  background: ${RED};
  box-shadow: ${(p) => p.$edge ?? "none"};
`;

const NairaAmount = ({ rise }: { rise: number }) => (
  <BaseRow $rise={rise} $ml={60}>
    <Naira small />
    <Text w={89} ml={3} face="plain" size={29} color="#fff">150.00</Text>
  </BaseRow>
);

const Arrow = ({ ml, mt = 0 }: { ml: number; mt?: number }) => (
  <Chevron w={22} h={11} ml={ml} mt={mt} color={ICE} stroke={3} />
);

const Currency = () => (
  <FrameBox $w={316} $h={550} $ml={233} $mt={423}>
    <Dashes w={316} h={550} />
    <TopRow $mt={67}>
      <Drawing $w={20} $h={14} $ml={91} viewBox="0 0 20 14">
        <path d="M0 2.500H20M0 9H20" stroke="#8fd98b" strokeWidth={2} />
      </Drawing>
      <Arrow ml={130} mt={2} />
    </TopRow>
    <Option $mt={38} $edge={`${u(2)} ${u(-1)} 0 #edf2fa`}>
      <NairaAmount rise={40} />
      <Arrow ml={49} mt={26} />
    </Option>
    <Option $mt={2}>
      <Text rise={40} w={172} ml={31} face="plain" size={29} color="#fff">0.000162 btc</Text>
    </Option>
    <TopRow $mt={54}>
      <Arrow ml={241} />
    </TopRow>
    <Option $mt={53} $edge={`${u(2)} ${u(-2)} 0 #edf2fa`}>
      <Text rise={44.5} w={172} ml={31} face="plain" size={29} color="#fff">0.000162 btc</Text>
      <Arrow ml={17} mt={30} />
    </Option>
    <Option $mt={2}>
      <NairaAmount rise={41} />
    </Option>
  </FrameBox>
);

const Notice = () => (
  <FrameBox $w={863} $h={484} $ml={-76} $mt={251}>
    <Dashes w={863} h={484} />
    <Text rise={204} w={586} ml={137} size={30} color={RED}>FYI: Tournaments are played every 20 minutes</Text>
  </FrameBox>
);

/* ---------- board ---------- */

export default function App() {
  return (
    <>
      <Global />
      <Board>
        <Column>
          <TopArea>
            <Selector />
            <Intro />
          </TopArea>
          <ClosedBar />
          <Footer mt={146} />
          <Countdown />
        </Column>
        <Column>
          <TopArea>
            <Selector />
            <Intro />
          </TopArea>
          <HowItWorks detached ml={-8} mt={16} />
          <Footer mt={62} />
          <Currency />
        </Column>
        <Column>
          <TopArea>
            <Selector />
            <Joined />
          </TopArea>
          <ClosedBar />
          <Stage mt={60} />
          <Footer tall mt={332} />
          <Notice />
        </Column>
        <Column>
          <TopArea>
            <Selector />
            <Joined />
          </TopArea>
          <HowItWorks />
          <Stage mt={86} shift={-2} />
          <Footer tall mt={354} />
        </Column>
        <Dashes w={3464} h={5586} inset={1} />
      </Board>
    </>
  );
}
